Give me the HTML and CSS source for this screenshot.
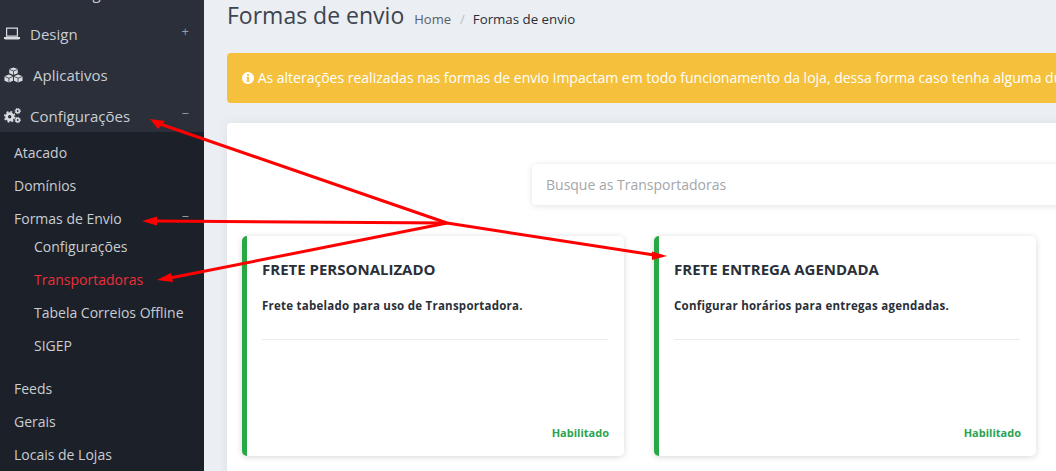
FILE: index.html
```html
<!DOCTYPE html>
<html>
<head>
    <title>Formas de envio</title>
    <link rel="stylesheet" href="styles.css">
</head>
<body>
    <div class="sidebar">
        <div class="menu-item clipped"><span class="menu-label">Marketing</span></div>
        <div class="menu-item">
            <svg class="menu-icon laptop" viewBox="0 0 16 13"><path d="M2.600 1.100h10.800v8H2.600z" fill="none" stroke="currentColor" stroke-width="1.200"/><path d="M0 10h16v1.300L15 12.500H1L0 11.300z" fill="currentColor"/></svg>
            <span class="menu-label">Design</span>
            <span class="toggle">+</span>
        </div>
        <div class="menu-item">
            <svg class="menu-icon cubes" viewBox="0 0 20 16"><g fill="currentColor"><path d="M10 0l4.500 1.800v4.400L10 8 5.500 6.200V1.800z"/><path d="M5.200 7.500l4.300 1.800v4.700L5.200 16 .5 14V9.300z"/><path d="M14.800 7.500l4.700 1.800V14l-4.700 2-4.300-2V9.300z"/></g><g stroke="#2a2f39" stroke-width=".8" fill="none"><path d="M5.500 2L10 3.800 14.500 2M10 3.800V8M.5 9.500l4.700 1.900 4.300-1.900M5.200 11.400V16M10.500 9.500l4.300 1.900 4.700-1.900M14.800 11.400V16"/></g></svg>
            <span class="menu-label">Aplicativos</span>
        </div>
        <div class="menu-item">
            <svg class="menu-icon cogs" viewBox="0 0 17 16"><g fill="none" stroke="currentColor"><circle cx="5.700" cy="8.700" r="3.100" stroke-width="2.800"/><circle cx="5.700" cy="8.700" r="5" stroke-width="1.600" stroke-dasharray="2 1.930"/><circle cx="13.700" cy="3" r="1.700" stroke-width="1.600"/><circle cx="13.700" cy="12" r="1.700" stroke-width="1.600"/><circle cx="13.700" cy="3" r="2.800" stroke-width=".9" stroke-dasharray="1.100 1.100"/><circle cx="13.700" cy="12" r="2.800" stroke-width=".9" stroke-dasharray="1.100 1.100"/></g></svg>
            <span class="menu-label">Configurações</span>
            <span class="toggle">−</span>
        </div>
        <div class="submenu">
            <a class="sub-link">Atacado</a>
            <a class="sub-link">Domínios</a>
            <a class="sub-link">Formas de Envio<span class="toggle small">−</span></a>
            <div class="sub-group">
                <a class="sub-link nested">Configurações</a>
                <a class="sub-link nested active">Transportadoras</a>
                <a class="sub-link nested">Tabela Correios Offline</a>
                <a class="sub-link nested">SIGEP</a>
            </div>
            <a class="sub-link">Feeds</a>
            <a class="sub-link">Gerais</a>
            <a class="sub-link">Locais de Lojas</a>
        </div>
    </div>

    <div class="main">
        <div class="page-head">
            <h1>Formas de envio</h1>
            <span class="crumb">Home</span>
            <span class="crumb-sep">/</span>
            <span class="crumb current">Formas de envio</span>
        </div>

        <div class="alert">
            <svg class="alert-icon" viewBox="0 0 12 12"><circle cx="6" cy="6" r="6" fill="#fff"/><rect x="5" y="2.200" width="2" height="1.900" fill="#f6c23d"/><path d="M4.500 5h2.500v3.700h.6v1H4.500v-1h.6V6h-.6z" fill="#f6c23d"/></svg>
            As alterações realizadas nas formas de envio impactam em todo funcionamento da loja, dessa forma caso tenha alguma duvida entre em contato com o suporte
        </div>

        <div class="panel">
            <div class="search">Busque as Transportadoras</div>
            <div class="cards">
                <div class="card">
                    <h4>FRETE PERSONALIZADO</h4>
                    <p>Frete tabelado para uso de Transportadora.</p>
                    <hr>
                    <div class="status">Habilitado</div>
                </div>
                <div class="card">
                    <h4>FRETE ENTREGA AGENDADA</h4>
                    <p>Configurar horários para entregas agendadas.</p>
                    <hr>
                    <div class="status">Habilitado</div>
                </div>
            </div>
        </div>
    </div>

    <!-- setas vermelhas desenhadas por cima do print -->
    <svg class="arrows" viewBox="0 0 1056 471">
        <g stroke="#f00" stroke-width="3" fill="none">
            <path d="M447 223L160 124"/>
            <path d="M447 223L155 221"/>
            <path d="M447 223L170 278"/>
            <path d="M447 223L654 255"/>
        </g>
        <g fill="#f00">
            <path d="M150 119L165 121L158 129z"/>
            <path d="M142 221L157 216.500L157 225.500z"/>
            <path d="M157 280L171 273L173 282z"/>
            <path d="M667 256L652 251.500L652 260z"/>
        </g>
    </svg>
</body>
</html>
```

FILE: styles.css
```css
html, body { margin: 0; padding: 0; height: 471px; overflow: hidden; }
body { display: flex; font-family: "Open Sans", sans-serif; background: #ebeef2; color: #2a2f39; position: relative; }

.sidebar { width: 204px; flex: none; background: #2a2f39; color: #c9cdd3; margin-top: -28px; }
.menu-item { height: 41px; display: flex; align-items: center; padding-left: 4px; font-size: 15px; position: relative; }
.menu-icon { flex: none; color: #d8dbdf; }
.menu-icon.laptop { width: 16px; height: 13px; margin-right: 10px; }
.menu-icon.cubes { width: 19px; height: 16px; margin-right: 10px; }
.menu-icon.cogs { width: 17px; height: 16px; margin-right: 9px; }
.menu-label { line-height: 20px; position: relative; }
.clipped .menu-label { margin-left: 26px; }
.toggle { position: absolute; right: 15px; top: 9px; font-size: 13px; color: #9a9ea5; }
.toggle.small { top: -2px; }

.submenu { background: #1c2028; margin-top: -4px; padding: 4px 0 0; position: relative; }
.sub-link { display: block; position: relative; height: 33px; line-height: 33px; padding-left: 14px; font-size: 14px; color: #c9cdd3; }
.sub-group { margin-top: -5px; margin-bottom: 10px; }
.sub-link.nested { padding-left: 34px; }
.sub-link.active { color: #ee2e38; }

.main { flex: 1; min-width: 0; padding-left: 23px; overflow: hidden; }
.page-head { height: 55px; display: flex; align-items: baseline; white-space: nowrap; margin-top: -2px; }
.page-head h1 { margin: -2px 10px 0 0; font-size: 23px; font-weight: 400; line-height: 38px; color: #3e444e; }
.crumb { font-size: 13px; color: #5a6069; }
.crumb.current { color: #2a2f39; font-size: 13.300px; }
.crumb-sep { font-size: 13px; color: #b9bdc3; margin: 0 8px 0 9px; }

.alert { width: 1300px; height: 50px; line-height: 50px; box-sizing: border-box; padding-left: 15px; background: #f5c13c; color: #fff; border-radius: 4px; font-size: 14px; white-space: nowrap; }
.alert-icon { width: 12px; height: 12px; vertical-align: -1px; }

.panel { width: 1300px; height: 400px; margin-top: 20px; padding: 41px 15px 0; box-sizing: border-box; background: #fff; border-radius: 4px; box-shadow: 0 0 12px rgba(0, 0, 0, 0.06); }
.search { width: 800px; height: 41px; line-height: 41px; margin-left: 290px; padding-left: 14px; box-sizing: border-box; font-size: 14px; color: #a3a6aa; background: #fff; border-radius: 4px; box-shadow: 0 1px 6px rgba(0, 0, 0, 0.12); }

.cards { display: flex; gap: 30px; margin-top: 31px; }
.card { width: 382px; height: 220px; box-sizing: border-box; padding: 23px 16px 0 15px; position: relative; background: #fff; border-left: 5px solid #28a745; border-radius: 5px; box-shadow: 0 1px 6px rgba(0, 0, 0, 0.16); }
.card h4 { margin: 0; font-size: 15px; font-weight: 700; line-height: 20px; color: #2a2f39; }
.card p { margin: 18px 0 0; font-size: 11.500px; font-weight: 700; line-height: 18px; letter-spacing: 0.250px; color: #2a2f39; }
.card hr { border: 0; border-top: 1px solid #e9ebed; margin: 24px 0 0; }
.status { position: absolute; right: 15px; bottom: 15px; font-size: 11px; font-weight: 700; line-height: 16px; color: #2ba34f; }

.arrows { position: absolute; left: 0; top: 0; width: 1056px; height: 471px; pointer-events: none; }
```
